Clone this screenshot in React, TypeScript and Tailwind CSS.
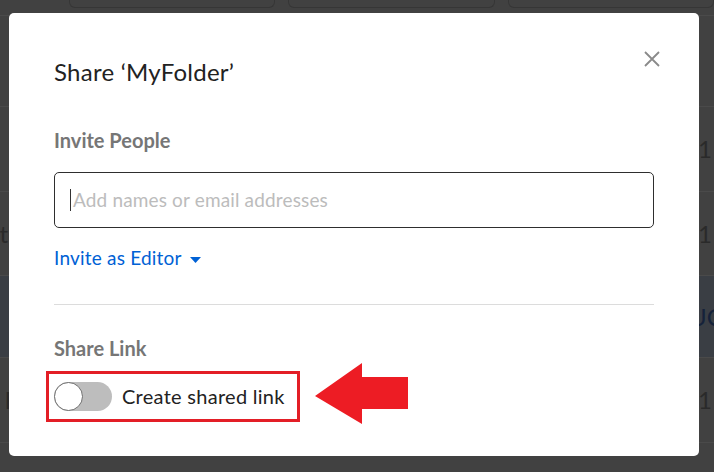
import React from "react";

type Row = {
  h: string;
  left: string;
  leftW: string;
  right: string;
  rightW: string;
  tint: boolean;
};

const rows: Row[] = [
  { h: "h-[91px]", left: "", leftW: "w-[9px]", right: "", rightW: "w-[30px]", tint: false },
  { h: "h-[85px]", left: "", leftW: "w-[9px]", right: "11", rightW: "w-[30px]", tint: false },
  { h: "h-[84px]", left: "Report", leftW: "w-[8px]", right: "11", rightW: "w-[30px]", tint: false },
  { h: "h-[82px]", left: "", leftW: "w-[9px]", right: "UC", rightW: "w-[25px]", tint: true },
  { h: "h-[85px]", left: "F", leftW: "w-[18px]", right: "11", rightW: "w-[30px]", tint: false },
];

function BackgroundPage() {
  return (
    <div className="h-[472px] w-[714px] bg-[#414141] overflow-hidden font-['Lato',sans-serif]">
      {/* header strip with faint field boxes */}
      <div className="h-[16px] flex gap-[13px] pl-[69px] border-b border-[#4a4a4a]">
        <div className="w-[254px] h-[8px] rounded-b-[6px] border border-t-0 border-[#363636]" />
        <div className="w-[254px] h-[8px] rounded-b-[6px] border border-t-0 border-[#363636]" />
        <div className="w-[254px] h-[8px] rounded-b-[6px] border border-t-0 border-[#363636]" />
      </div>
      {rows.map((r, i) => (
        <div
          key={i}
          className={`${r.h} flex items-center justify-between border-b border-[#4a4a4a] text-[24px] ${
            r.tint ? "bg-[#3a3e44] text-[#15223a]" : "text-[#2a2a2a]"
          }`}
        >
          <div className={`${r.leftW} overflow-hidden flex justify-end`}>
            <span className="whitespace-nowrap">{r.left}</span>
          </div>
          <div className={`${r.rightW} overflow-hidden`}>
            <span className="whitespace-nowrap">{r.right}</span>
          </div>
        </div>
      ))}
    </div>
  );
}

function CloseIcon() {
  return (
    <svg width="16" height="16" viewBox="0 0 16 16" className="shrink-0">
      <path d="M1 1L15 15M15 1L1 15" stroke="#8a8a8a" strokeWidth="1.8" />
    </svg>
  );
}

function RedArrow() {
  return (
    <svg width="93" height="61" viewBox="0 0 93 61">
      <polygon
        points="0,33 47,0 47,14 93,14 93,46 47,46 47,61"
        fill="#ed1c24"
      />
    </svg>
  );
}

function Toggle() {
  return (
    <div className="relative w-[58px] h-[29px] rounded-full bg-[#bdbdbd] shrink-0">
      <div className="absolute left-0 top-0 w-[29px] h-[29px] rounded-full bg-white border border-[#6e6e6e]" />
    </div>
  );
}

function ShareDialog() {
  return (
    <div className="absolute left-[9px] top-[13px] w-[690px] h-[443px] bg-white rounded-[5px] font-['Lato',sans-serif]">
      {/* Header */}
      <div className="flex justify-between items-start pt-[38px] pl-[45px] pr-[39px]">
        <h2 className="mt-[6px] text-[24px] leading-[30px] tracking-[0.25px] text-[#222]">
          Share ‘MyFolder’
        </h2>
        <CloseIcon />
      </div>

      <div className="pl-[45px] pr-[45px]">
        {/* Invite People */}
        <div className="mt-[41px] text-[20px] leading-[24px] font-bold text-[#767676]">
          Invite People
        </div>
        <div className="mt-[20px] h-[56px] rounded-[5px] border border-[#2e2e2e] flex items-center pl-[15px]">
          <span className="w-px h-[22px] bg-[#333]" />
          <span className="ml-[2px] text-[19px] tracking-[0.15px] text-[#bcbcbc]">
            Add names or email addresses
          </span>
        </div>
        <div className="mt-[18px] flex items-center gap-[8px] text-[19px] leading-[24px] tracking-[0.2px] text-[#0061d5]">
          <span>Invite as Editor</span>
          <svg width="11" height="6" viewBox="0 0 11 6" className="mt-[3px]">
            <polygon points="0,0 11,0 5.5,6" fill="#0061d5" />
          </svg>
        </div>

        <div className="mt-[34px] h-px bg-[#dcdcdc]" />

        {/* Share Link */}
        <div className="mt-[31px] text-[20px] leading-[24px] font-bold text-[#767676]">
          Share Link
        </div>
        <div className="mt-[8px] flex items-center">
          <div className="-ml-[8px] w-[254px] h-[51px] border-[3px] border-[#e31e26] flex items-center pl-[5px] gap-[10px]">
            <Toggle />
            <span className="text-[20px] tracking-[0.28px] text-[#222] whitespace-nowrap">
              Create shared link
            </span>
          </div>
          <div className="ml-[15px] mt-[-5px]">
            <RedArrow />
          </div>
        </div>
      </div>
    </div>
  );
}

export default function App() {
  return (
    <div className="relative w-[714px] h-[472px] overflow-hidden">
      <BackgroundPage />
      <ShareDialog />
    </div>
  );
}
